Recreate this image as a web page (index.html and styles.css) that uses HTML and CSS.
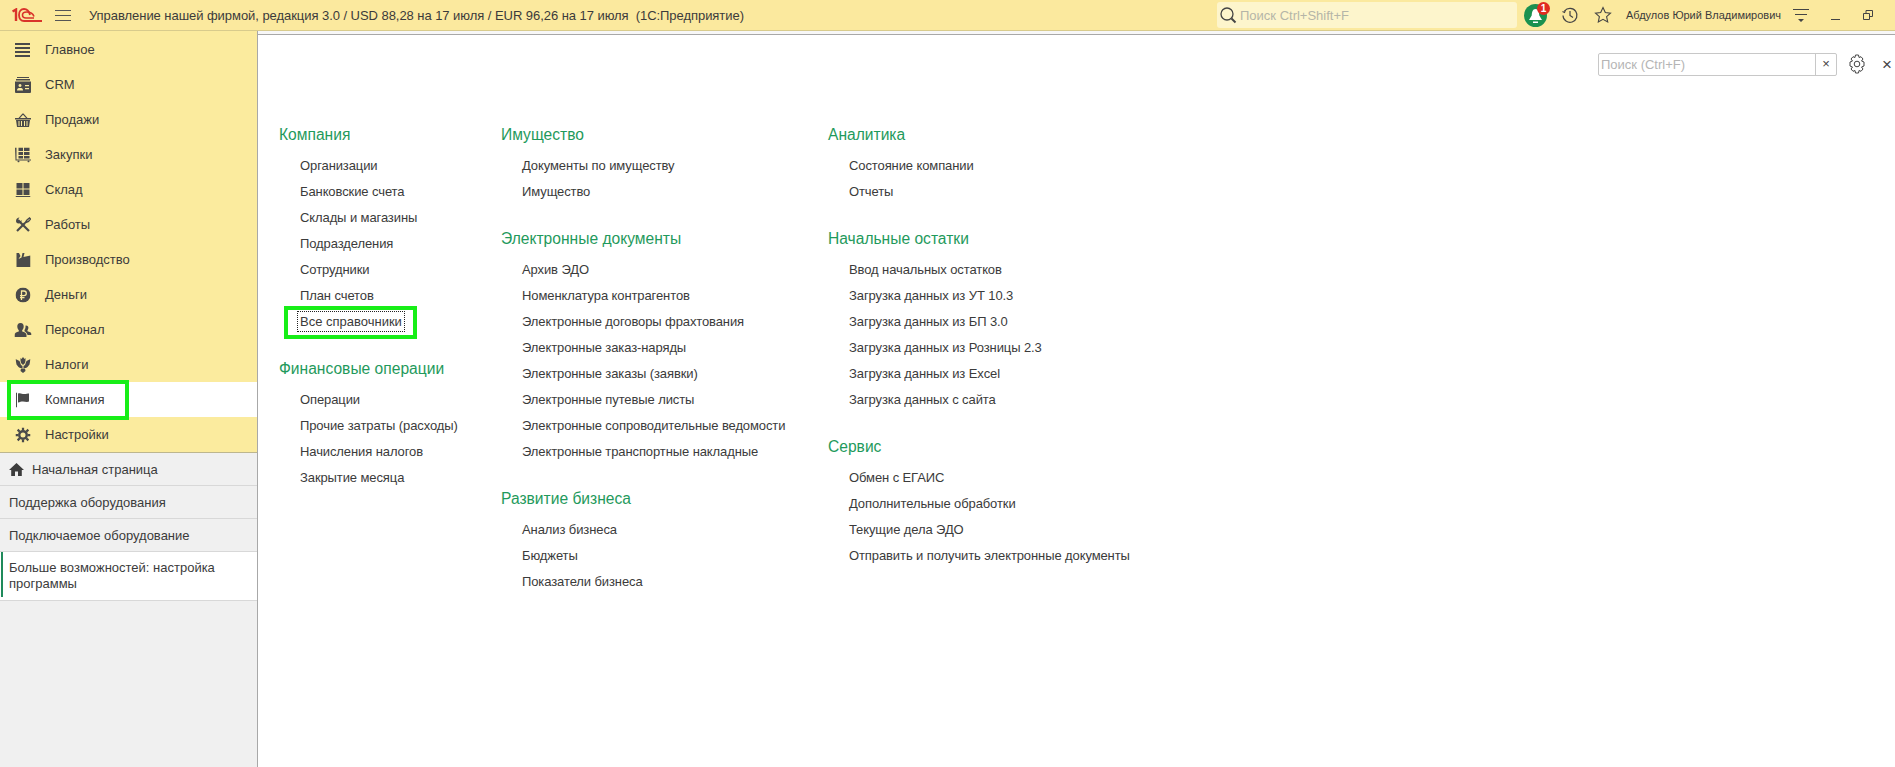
FILE: index.html
```html
<!DOCTYPE html>
<html lang="ru">
<head>
    <meta charset="UTF-8">
    <title>Управление нашей фирмой</title>
    <link rel="stylesheet" href="styles.css">
</head>
<body>
    <header class="topbar">
        <svg class="logo" width="30" height="15" viewBox="0 0 30 15" fill="none" stroke="#d9332a">
            <path d="M0.500 3.500L4 1.500V13" stroke-width="2.400"/>
            <path d="M18 7C17 3 14.500 1 12 1C9 1 7 3.500 7 7C7 10.500 9 13 12 13H30" stroke-width="1.800"/>
            <path d="M22 8.500C21 5.500 18 4 14.500 4C12 4 10.500 5.500 10.500 7C10.500 8.800 12 10 14 10H22" stroke-width="1.600"/>
        </svg>
        <svg class="burger" width="16" height="13" viewBox="0 0 16 13" stroke="#555" stroke-width="1">
            <path d="M0 1.500h16M0 6.500h16M0 11.500h16"/>
        </svg>
        <div class="app-title">Управление нашей фирмой, редакция 3.0 / USD 88,28 на 17 июля / EUR 96,26 на 17 июля &nbsp;(1С:Предприятие)</div>
        <div class="global-search">
            <svg width="18" height="18" viewBox="0 0 18 18" fill="none" stroke="#444" stroke-width="1.300">
                <circle cx="8" cy="8" r="6"/><path d="M12.500 12.500l4 4" stroke-width="2"/>
            </svg>
            <span>Поиск Ctrl+Shift+F</span>
        </div>
        <div class="bell">
            <svg width="23" height="23" viewBox="0 0 23 23"><circle cx="11.500" cy="11.500" r="11.500" fill="#1a9150"/><path d="M11.500 5c3 0 3.500 3 3.800 6.500l2.700 4.500H5l2.700-4.500C8 8 8.500 5 11.500 5z" fill="#fff"/><rect x="9" y="17.500" width="5" height="1.500" fill="#fff"/></svg>
            <span class="badge">1</span>
        </div>
        <svg class="top-icon history" width="18" height="18" viewBox="0 0 18 18" fill="none" stroke="#444" stroke-width="1.200">
            <path d="M3.500 5a7 7 0 1 1-1.500 4.500"/><path d="M1.500 5.500l2 1 1-2.500"/><path d="M9 5v4.500l3 2"/>
        </svg>
        <svg class="top-icon star" width="18" height="18" viewBox="0 0 18 18" fill="none" stroke="#444" stroke-width="1.100">
            <path d="M9 1.500l2.300 5 5.200.6-3.900 3.500 1.100 5.400L9 13.300 4.300 16l1.100-5.400L1.500 7.100l5.200-.6z"/>
        </svg>
        <div class="user-name">Абдулов Юрий Владимирович</div>
        <svg class="top-icon menu" width="16" height="14" viewBox="0 0 16 14" fill="#444">
            <path d="M0 1h16v1H0zM2 6h12v1H2zM5 11h6l-3 3z"/>
        </svg>
        <div class="win-min"></div>
        <svg class="win-restore" width="10" height="10" viewBox="0 0 10 10" fill="none" stroke="#444">
            <path d="M.5 3.500h6v6h-6zM3 3.500V.5h6.500v6H7"/>
        </svg>
    </header>

    <div class="workspace">
        <aside class="sidebar">
            <nav class="sections">
                <div class="section-item">
                    <svg class="section-icon" width="16" height="14" viewBox="0 0 16 14" fill="#4a4a4a"><path d="M0 0h15v2H0zM0 4h15v2H0zM0 8h15v2H0zM0 12h15v2H0z"/></svg>
                    <span>Главное</span>
                </div>
                <div class="section-item">
                    <svg class="section-icon" width="16" height="16" viewBox="0 0 16 16" fill="#4a4a4a"><path d="M2 0h12v1H2zM1 2h14v1.500H1z"/><path fill-rule="evenodd" d="M0 4.500h16V15a1 1 0 0 1-1 1H1a1 1 0 0 1-1-1zM5 7a1.500 1.500 0 1 0 .01 0zM2 13.500h6c0-2-1-2.500-3-2.500s-3 .5-3 2.500zM10 8v1.200h4V8zM10 11v1.200h4V11z"/></svg>
                    <span>CRM</span>
                </div>
                <div class="section-item">
                    <svg class="section-icon" width="16" height="14" viewBox="0 0 16 14" fill="#4a4a4a"><path d="M0 5h16v1.500H0z"/><path d="M3.500 5l4-4.500h1l4 4.500h-1.500L8 1.800 5 5z"/><path fill-rule="evenodd" d="M1 7h14l-1 7H2zM3.500 8v5h1V8zM6 8v5h1V8zM9 8v5h1V8zM11.500 8v5h1V8z"/></svg>
                    <span>Продажи</span>
                </div>
                <div class="section-item">
                    <svg class="section-icon" width="16" height="15" viewBox="0 0 16 15" fill="#4a4a4a"><path d="M0 0h1.500v12H16v1H0.500z"/><path d="M3.500 0H8v3.500H3.500zM9 0h5.500v3.500H9zM3.500 4.500H8v3H3.500zM9 4.500h5.500v3H9zM3.500 8.500H8V11H3.500zM9 8.500h5.500V11H9z"/><circle cx="3.500" cy="14" r="1"/><circle cx="13.500" cy="14" r="1"/></svg>
                    <span>Закупки</span>
                </div>
                <div class="section-item">
                    <svg class="section-icon" width="15" height="14" viewBox="0 0 15 14" fill="#4a4a4a"><path d="M1 0h6v5.500H1zM8 0h6v5.500H8zM1 6.500h6V12H1zM8 6.500h6V12H8zM0 13h15v1H0z"/></svg>
                    <span>Склад</span>
                </div>
                <div class="section-item">
                    <svg class="section-icon" width="16" height="16" viewBox="0 0 16 16" fill="none" stroke="#4a4a4a"><path d="M3 3l11 11" stroke-width="2.200"/><path d="M1 4c0-2 1.500-3.500 3.500-3.500L3 2.500 5 4.500 6.500 3c.5 2-1 3.500-3 3.500C2 6.500 1 5.500 1 4z" fill="#4a4a4a" stroke="none"/><path d="M2 14l8-8" stroke-width="2.200"/><path d="M10 6l2-3 2.500-2 1 1-2 2.500z" stroke-width="1.400"/></svg>
                    <span>Работы</span>
                </div>
                <div class="section-item">
                    <svg class="section-icon" width="15" height="14" viewBox="0 0 15 14" fill="#4a4a4a"><path d="M1 0h2.500L5 3 3 6l3-1.500L7 0h2L8 4l7-1.500V14H1z"/></svg>
                    <span>Производство</span>
                </div>
                <div class="section-item">
                    <svg class="section-icon" width="15" height="15" viewBox="0 0 15 15"><circle cx="7.500" cy="7.500" r="7.500" fill="#4a4a4a"/><path d="M6 12.500V3.500h2.500a2.300 2.300 0 0 1 0 4.600H4.500M4.500 10.200H9" fill="none" stroke="#fbeb9e" stroke-width="1.300"/></svg>
                    <span>Деньги</span>
                </div>
                <div class="section-item">
                    <svg class="section-icon" width="17" height="14" viewBox="0 0 17 14" fill="#4a4a4a"><path d="M6 0c2.500 0 3.400 2 3.200 3.800-.1 1.500-.7 2.700-1.500 3.400V8.500c2.500.6 4.300 1.800 4.300 3.500v2H0v-2c0-1.700 1.800-2.900 4.300-3.500V7.200C3.500 6.500 2.900 5.300 2.800 3.800 2.600 2 3.500 0 6 0z"/><path d="M11.500 2.500c1.700 0 2.500 1.200 2.400 2.600-.1 1-.5 1.700-1 2.300v.8c2 .5 4.100 1.300 4.100 2.800v1h-4c0-1.500-1.500-3-3-3.800V7c.9-1.300 1.200-3 1-4.300.2-.1.300-.2.500-.2z"/></svg>
                    <span>Персонал</span>
                </div>
                <div class="section-item">
                    <svg class="section-icon" width="15" height="16" viewBox="0 0 15 16" fill="#4a4a4a"><path d="M5 1l1 1 1.500-2L9 2l1-1v2.500L9.500 6 7.500 8 5.500 6 5 3.500z"/><path d="M0 2l2 1 2 1 1.500 4L7 9v2H4.500L3 10 1 7.500zM15 2l-2 1-2 1-1.500 4L8 9v2h2.500L12 10l2-2.500z"/><path d="M5.500 11.500h4L10 14l-2.500 2L5 14z"/></svg>
                    <span>Налоги</span>
                </div>
                <div class="section-item active">
                    <svg class="section-icon" width="14" height="15" viewBox="0 0 14 15" fill="#4a4a4a"><path d="M0 0h1v15H0z"/><path d="M2 1c2.500-1 4 .5 6 .5s4-.5 5-.5v8c-2 1-4 0-6 0s-3 .5-5 1z"/></svg>
                    <span>Компания</span>
                    <div class="highlight section-highlight"></div>
                </div>
                <div class="section-item">
                    <svg class="section-icon" width="15" height="15" viewBox="0 0 16 16" fill="none" stroke="#4a4a4a"><circle cx="8" cy="8" r="4" stroke-width="2.600"/><path d="M8 0v3M8 13v3M0 8h3M13 8h3M2.300 2.300l2.200 2.200M11.500 11.500l2.200 2.200M2.300 13.700l2.200-2.200M11.500 4.500l2.200-2.200" stroke-width="2.400"/></svg>
                    <span>Настройки</span>
                </div>
            </nav>
            <div class="open-list">
                <div class="open-item">
                    <svg width="15" height="13" viewBox="0 0 15 13" fill="#3c3c3c"><path d="M7.500 0L15 7h-2.200v6H9V8.500H6V13H2.200V7H0z"/></svg>
                    <span>Начальная страница</span>
                </div>
                <div class="open-item">Поддержка оборудования</div>
                <div class="open-item">Подключаемое оборудование</div>
                <div class="open-item current">Больше возможностей: настройка программы</div>
            </div>
        </aside>

        <main class="content">
            <div class="content-tools">
                <div class="page-search">
                    <span class="page-search-text">Поиск (Ctrl+F)</span>
                    <span class="page-search-clear">×</span>
                </div>
                <svg width="18" height="20" viewBox="0 0 18 20" fill="none" stroke="#444" stroke-width="1">
                    <circle cx="9" cy="10" r="2.800"/>
                    <path d="M7.500 1h3l.5 2.500 2-.8 2 2.300-1.500 2 2.500 1v4l-2.500 1 1.500 2-2 2.300-2-.8-.5 2.500h-3L7 16.500l-2 .8L3 15l1.500-2L2 12V8l2.500-1L3 5l2-2.300 2 .8z"/>
                </svg>
                <span class="content-close">×</span>
            </div>
            <div class="menu-columns">
                <div class="menu-col">
                    <div class="menu-group">
                        <h2>Компания</h2>
                        <a>Организации</a>
                        <a>Банковские счета</a>
                        <a>Склады и магазины</a>
                        <a>Подразделения</a>
                        <a>Сотрудники</a>
                        <a>План счетов</a>
                        <a class="focused"><span>Все справочники</span><div class="highlight link-highlight"></div></a>
                    </div>
                    <div class="menu-group">
                        <h2>Финансовые операции</h2>
                        <a>Операции</a>
                        <a>Прочие затраты (расходы)</a>
                        <a>Начисления налогов</a>
                        <a>Закрытие месяца</a>
                    </div>
                </div>
                <div class="menu-col">
                    <div class="menu-group">
                        <h2>Имущество</h2>
                        <a>Документы по имуществу</a>
                        <a>Имущество</a>
                    </div>
                    <div class="menu-group">
                        <h2>Электронные документы</h2>
                        <a>Архив ЭДО</a>
                        <a>Номенклатура контрагентов</a>
                        <a>Электронные договоры фрахтования</a>
                        <a>Электронные заказ-наряды</a>
                        <a>Электронные заказы (заявки)</a>
                        <a>Электронные путевые листы</a>
                        <a>Электронные сопроводительные ведомости</a>
                        <a>Электронные транспортные накладные</a>
                    </div>
                    <div class="menu-group">
                        <h2>Развитие бизнеса</h2>
                        <a>Анализ бизнеса</a>
                        <a>Бюджеты</a>
                        <a>Показатели бизнеса</a>
                    </div>
                </div>
                <div class="menu-col">
                    <div class="menu-group">
                        <h2>Аналитика</h2>
                        <a>Состояние компании</a>
                        <a>Отчеты</a>
                    </div>
                    <div class="menu-group">
                        <h2>Начальные остатки</h2>
                        <a>Ввод начальных остатков</a>
                        <a>Загрузка данных из УТ 10.3</a>
                        <a>Загрузка данных из БП 3.0</a>
                        <a>Загрузка данных из Розницы 2.3</a>
                        <a>Загрузка данных из Excel</a>
                        <a>Загрузка данных с сайта</a>
                    </div>
                    <div class="menu-group">
                        <h2>Сервис</h2>
                        <a>Обмен с ЕГАИС</a>
                        <a>Дополнительные обработки</a>
                        <a>Текущие дела ЭДО</a>
                        <a>Отправить и получить электронные документы</a>
                    </div>
                </div>
            </div>
        </main>
    </div>
</body>
</html>
```

FILE: styles.css
```css
* {
    margin: 0;
    padding: 0;
    box-sizing: border-box;
}

body {
    height: 100vh;
    overflow: hidden;
    display: flex;
    flex-direction: column;
    background: #fff;
    color: #3b3b3b;
    font-family: 'Liberation Sans', Arial, sans-serif;
    font-size: 13px;
}

/* top bar */
.topbar {
    height: 31px;
    flex: none;
    display: flex;
    align-items: center;
    background: #fbe99e;
    border-bottom: 1px solid #d8cb8c;
}

.logo {
    margin-left: 12px;
}

.burger {
    margin-left: 13px;
}

.app-title {
    margin-left: 18px;
    font-size: 13px;
    letter-spacing: -0.05px;
    white-space: nowrap;
    width: 1128px;
}

.global-search {
    width: 300px;
    height: 26px;
    display: flex;
    align-items: center;
    gap: 3px;
    padding-left: 2px;
    background: #fdf5cc;
    border-radius: 3px;
    font-size: 13px;
    color: #b5b5a8;
}

.bell {
    position: relative;
    width: 23px;
    height: 23px;
    margin-left: 7px;
}

.badge {
    position: absolute;
    top: -2px;
    right: -3px;
    width: 13px;
    height: 13px;
    border-radius: 50%;
    background: #e02b20;
    color: #fff;
    font-size: 10px;
    font-weight: bold;
    line-height: 13px;
    text-align: center;
}

.top-icon {
    flex: none;
}

.history {
    margin-left: 14px;
}

.star {
    margin-left: 15px;
}

.user-name {
    margin-left: 14px;
    width: 165px;
    font-size: 11px;
    white-space: nowrap;
}

.menu {
    margin-left: 2px;
}

.win-min {
    width: 9px;
    height: 1px;
    margin-left: 22px;
    margin-top: 9px;
    background: #444;
}

.win-restore {
    margin-left: 23px;
}

/* sidebar + content */
.workspace {
    flex: 1;
    display: flex;
    min-height: 0;
}

.sidebar {
    width: 258px;
    flex: none;
    display: flex;
    flex-direction: column;
    background: #f0f0f0;
    border-right: 1px solid #a8a8a8;
}

.sections {
    padding-top: 1px;
    background: #fbeb9e;
    border-bottom: 1px solid #bdb68e;
}

.section-item {
    position: relative;
    height: 35px;
    display: flex;
    align-items: center;
    padding-left: 45px;
}

.section-item.active {
    background: #fff;
}

.section-icon {
    position: absolute;
    left: 23px;
    top: 50%;
    transform: translate(-50%, -50%);
}

.open-item {
    height: 33px;
    display: flex;
    align-items: center;
    gap: 8px;
    padding-left: 9px;
    border-bottom: 1px solid #d8d8d8;
}

.open-item svg {
    flex: none;
}

.open-item.current {
    height: 49px;
    padding-right: 30px;
    line-height: 16px;
    background: #fff;
    position: relative;
}

.open-item.current::before {
    content: '';
    position: absolute;
    left: 1px;
    top: 0;
    bottom: 3px;
    width: 2px;
    background: #1f8a5b;
}

.content {
    flex: 1;
    min-width: 0;
}

.content-tools {
    height: 45px;
    display: flex;
    align-items: flex-end;
    justify-content: flex-end;
    padding-top: 4px;
    background: linear-gradient(#f7f7f7 0, #f7f7f7 3px, #a8a8a8 3px, #a8a8a8 4px, #fff 4px);
}

.content-tools svg {
    margin-left: 11px;
    margin-bottom: 2px;
}

.page-search {
    width: 239px;
    height: 23px;
    display: flex;
    align-items: center;
    background: #fff;
    border: 1px solid #c8c8c8;
    border-radius: 2px;
    color: #b5b5b5;
    font-size: 13px;
}

.page-search-text {
    flex: 1;
    padding-left: 2px;
}

.page-search-clear {
    width: 21px;
    height: 100%;
    border-left: 1px solid #c8c8c8;
    color: #444;
    line-height: 20px;
    text-align: center;
}

.content-close {
    margin-left: 16px;
    width: 13px;
    font-size: 17px;
    line-height: 22px;
    color: #444;
}

.menu-columns {
    display: grid;
    grid-template-columns: 222px 327px 1fr;
    padding: 41px 0 0 21px;
}

.menu-group {
    margin-bottom: 16px;
}

.menu-group h2 {
    font-size: 15.600px;
    font-weight: normal;
    line-height: 36px;
    color: #1f9a5c;
}

.menu-group a {
    display: block;
    position: relative;
    height: 26px;
    padding-left: 21px;
    line-height: 26px;
    letter-spacing: -0.1px;
    white-space: nowrap;
}

.focused span {
    outline: 1px dotted #222;
    outline-offset: 2px;
    letter-spacing: 0;
}

/* green marks drawn over the screenshot */
.highlight {
    position: absolute;
    border: 4px solid #17ee17;
    pointer-events: none;
}

.section-highlight {
    left: 7px;
    top: -2px;
    width: 122px;
    height: 40px;
}

.link-highlight {
    left: 5px;
    top: -3px;
    width: 133px;
    height: 33px;
}
```
